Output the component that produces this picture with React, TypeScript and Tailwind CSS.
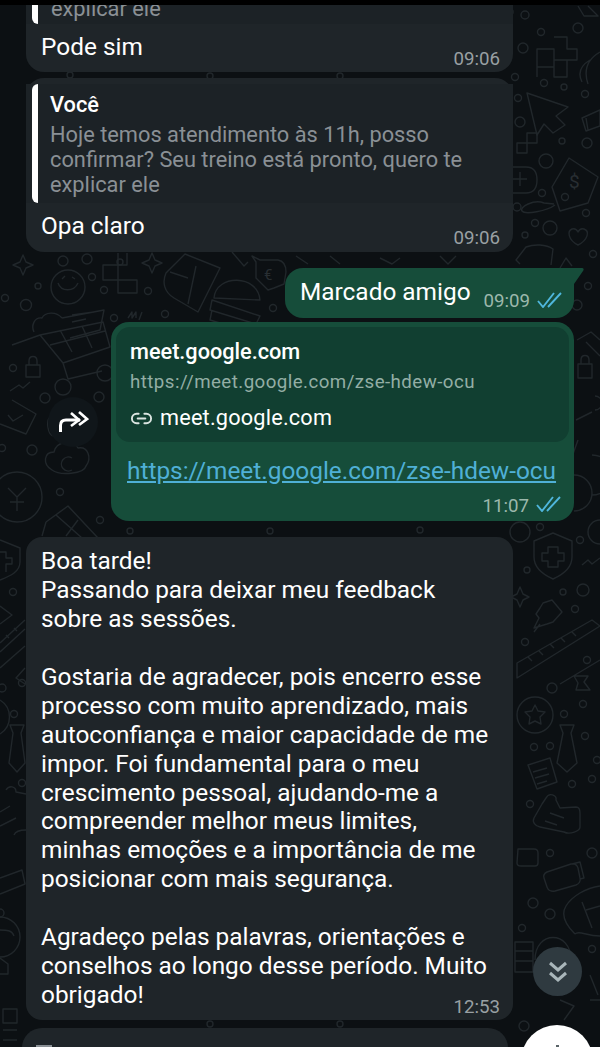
import { Link2 } from 'lucide-react';

// small rings scattered over the wallpaper: [x, y, r]
const rings = [
  [525, 15, 4], [541, 32, 3.5], [578, 28, 5], [523, 48, 5], [515, 77, 3.5], [544, 83, 3.5], [564, 87, 3], [585, 94, 3.5],
  [518, 98, 3.5], [520, 122, 5], [562, 141, 3], [587, 143, 5], [546, 161, 7], [542, 193, 3.5], [565, 197, 3.5], [517, 207, 4],
  [550, 228, 7], [535, 223, 3.5], [525, 235, 3], [586, 213, 3.5], [593, 254, 3.5], [588, 286, 3.5], [577, 305, 5],
  [520, 532, 10], [540, 527, 3.5], [580, 540, 3.5], [527, 570, 3], [563, 592, 3], [583, 590, 6], [575, 609, 3.5], [525, 642, 3.5], [587, 660, 3.5],
  [552, 688, 5], [583, 704, 3.5], [564, 714, 3.5], [585, 736, 3.5], [534, 747, 3.5], [550, 746, 3.5], [597, 760, 3.5], [592, 779, 3.5], [572, 784, 3.5],
  [530, 804, 3.5], [550, 853, 3.5], [592, 853, 5], [533, 903, 5], [550, 914, 5], [522, 928, 3.5], [592, 949, 3.5],
  [63, 261, 5], [87, 259, 5], [38, 286, 3], [92, 277, 3.5], [5, 298, 3.5], [26, 305, 5.5], [104, 290, 3.5], [148, 291, 3.5], [165, 314, 3.5], [114, 318, 3.5], [273, 308, 3.5],
  [13, 368, 3.5], [45, 398, 5], [99, 397, 5], [32, 450, 5], [60, 492, 3.5], [100, 520, 3.5], [2, 448, 3.5],
  [13, 592, 3.5], [22, 683, 3.5], [14, 714, 3.5], [22, 783, 3.5], [2, 688, 4], [0, 913, 4], [524, 1026, 5], [510, 12, 3],
  [70, 75, 3], [210, 76, 3], [340, 76, 3], [120, 262, 3], [130, 531, 3], [270, 531, 3], [420, 530, 3], [210, 1024, 3], [340, 1024, 3],
];

// wallpaper doodles, drawn once behind the chat
function Wallpaper() {
  return (
    <svg className="absolute inset-0" width="600" height="1047" fill="none" stroke="#21272b" strokeWidth="1.4" strokeLinejoin="round">
      {rings.map(([x, y, r], i) => (
        <circle key={i} cx={x} cy={y} r={r} />
      ))}
      {/* top right */}
      <path d="M554 37h13v12h10v11h-10v17h-13V67h-17V77h-0M537 67V49h17v18M567 60h-13" />
      <path d="M527 93l41 14-12 9 9 9-12 8-9-9-7 11z" />
      <path d="M527 133h10v10h-10zM517 143h10v10h-10z" />
      <path d="M510 167h16c8 0 11 6 11 13s-3 13-11 13h-16M520 172v14M513 179h14" />
      <path d="M569 158l29 19-10 26-28 8-8-24z" />
      <path d="M555 205c-8 6-30 10-33 6s12-12 22-8l10 1" />
      <path d="M578 245c-10-5-11-14-6-16 3-1 5 1 6 3 1-2 3-4 6-3 6 2 4 11-6 16z" />
      <path d="M520 264l-4-4 10-13c8-3 20-3 27 2l-2 16M560 268l6-10 6 8" />
      <path d="M588 6l10 10-14 0-6-10M590 60c-10 6-12 14-8 22M600 52c-14 8-16 20-12 32" />
      <path d="M582 118l18-8v16l-14 5zM586 118l2 12" />
      <text x="569" y="188" fontSize="19" fill="#282e32" stroke="none" fontFamily="Roboto">$</text>
      {/* beside the link bubble */}
      <path d="M578 364h14v14h-14zM581 364v-4c0-6 8-6 8 0v4M577 340l14 -8 9 8M600 356l-14-14" />
      <path d="M576 420l16-8M578 440l-5 14M595 396a7 7 0 1 1 0 14" />
      <path d="M574 475a18 18 0 0 1 0 36M592 455a20 20 0 0 1 0 40M600 520a12 12 0 0 0 0 24" />
      {/* right column, shield down to the balloon */}
      <path d="M553 533l19 8v16c0 12-10 18-19 22-9-4-19-10-19-22v-16zM548 547h10v6h6v8h-6v6h-10v-6h-6v-8h6z" />
      <path d="M582 565l6-5 4 4 8-6" />
      <path d="M520 587l3 7 6 3-6 3-3 7-3-7-6-3 6-3z" />
      <path d="M552 600l10 12-9 10-6 2-13 4 5-10-3-4 4-6 3-5zM534 632l6-8" />
      <path d="M517 663l75-43 8 6-83 52zM528 657l4 4M539 651l4 4M550 644l4 4M561 638l4 4M572 632l4 4" />
      <path d="M600 660l-40 24M574 676h14l-4 6 6 8-14 0 2-7z" />
      <circle cx="535" cy="715" r="18" />
      <path d="M535 705l3 6 7 1-5 5 1 7-6-3-6 3 1-7-5-5 7-1z" />
      <path d="M560 725h14l-3 8 6 30-10 9-10-9 6-30z" />
      <path d="M528 765l22-7 7 24-20 7zM533 772l14-4M535 778l14-4M537 784l10-3" />
      <path d="M546 798c3-6 11-3 10 2l4 8 16-1c3 0 4 3 4 6v14c0 4-10 8-16 5l-24-5c-5-1-8-5-6-9l8-14zM550 813l14 5M545 821l12 4" />
      <path d="M518 849h16c3 0 4 2 4 4v10c0 2-1 3-3 3h-14c-2 0-4-1-4-3z" />
      <path d="M547 872l24-8c4-1 6 1 7 4l2 10c1 3-1 6-4 7l-21 6c-4 1-7-1-8-4l-3-9c-1-3 1-5 3-6zM572 864l8-2 4 16-4 1" />
      <path d="M575 934c-10-10-14-20-9-28 6-10 20-18 34-20M600 936c-14 0-21-6-25-2M582 902l10 26M600 906l-14 4" />
      <path d="M515 942h18v30h-18zM515 951h18M515 961h18" />
      <path d="M535 960c0-30 36-30 36 0" />
      <path d="M560 1000l14 6-10 14M590 1000h10M590 975l8 20" />
      {/* band above the sent bubbles */}
      <path d="M23 255l3 7 7 3-7 3-3 7-3-7-7-3 7-3z" />
      <path d="M152 253l3 7 7 3-7 3-3 7-3-7-7-3 7-3z" />
      <circle cx="68" cy="287" r="17" />
      <path d="M58 283c3 9 16 9 20 0M62 279l3-3M72 277l3 2" />
      <path d="M62 318c-6-7-17-6-20 0-8-1-11 8-8 14M62 318l42-8-4 20-30 8M72 315l22-3M72 322l14-3" />
      <path d="M118 253v12h-15v15h15v13h19v-13h-19v-15h9v-12" />
      <path d="M185 254l35 14-22 44-24-14c-10-6-12-16-8-25zM170 272l18 6M196 266l-8 38" />
      <path d="M214 298c2-24 44-24 46 2zM212 300l48 16-4 8-46-14zM212 310l-2 10 46 14" />
      <path d="M252 256l8 4 18 0c6 1 8 6 8 12l-2 12-10 4-6 2-12-12 0-16zM232 252l12 14 4-4" />
      <text x="264" y="280" fontSize="15" fill="#282e32" stroke="none" fontFamily="Roboto">€</text>
      <path d="M128 318l4-6 0 6 4-6 0 6M142 312l-3 8" />
      <path d="M296 256l12 8M330 256l10 8M380 258l12 6 8-6M440 256l8 8 8-8" />
      {/* cart and everything under it */}
      <path d="M12 345l28-10 23 28 47-16-7-25-63 13M60 330l12 22M82 326l10 22M50 345l55-14M63 363l5 16 34-8" />
      <circle cx="63" cy="387" r="8" />
      <circle cx="105" cy="373" r="8" />
      <path d="M26 365h14v12H26zM29 365v-4c0-6 8-6 8 0v4" />
      <path d="M10 391l9-6 4 3 7-6" />
      <path d="M12 400l24 14-10 20-26-10M8 415l5 6 10-6" />
      <path d="M50 418c-4 0-3 18 4 18" />
      <path d="M52 470c-10-6-8-18 2-18 2-10 18-14 24-4 10-2 14 10 8 18-2 8-26 10-34 4zM72 458a7 7 0 1 0 0 12" />
      <circle cx="17" cy="497" r="25" />
      <path d="M8 488l9 9 9-9M17 497v14M10 502h14" />
      <path d="M46 522l22-16 30 32M56 515l26 23M46 522l-4 14M78 520l-12 16" />
      {/* left edge, beside the feedback bubble */}
      <path d="M0 540l20 8v14c0 10-10 14-20 18M0 552h6v6h6v6H6v8" />
      <path d="M0 606l12 9-12 9M0 643l25-23M0 652l25-23M6 635l3 3M14 628l3 3" />
      <path d="M0 668l25-22M25 668l-9 10 9 6" />
      <path d="M0 700a20 20 0 0 1 0 34" />
      <path d="M10 725h14l-3 8 4 30-8 9-8-9 4-30z" />
      <path d="M6 790c3-5 10-4 10 2l10 2M0 812l10-6M0 826l16-8M14 835c2-5 8-5 12-5" />
      <path d="M0 878l22-8 3 14-25 10" />
      <path d="M0 917a20 20 0 0 1 0 40M0 930c6 0 12 0 14 6" />
      <path d="M0 958l8 6v10H0" />
      <path d="M3 1023h14v-14H3zM3 1030h14M3 1040h14" />
    </svg>
  );
}

function Ticks() {
  return (
    <svg width="25" height="16" viewBox="0 0 25 16" fill="none" stroke="#4fb6dc" strokeWidth="1.9" className="shrink-0">
      <path d="M1 9l5 6L17 1M11 15L24 1" />
    </svg>
  );
}

function Time({ children }: { children: string }) {
  return <span className="text-[18.7px] leading-[24px] text-[#99a0a3]">{children}</span>;
}

export default function App() {
  return (
    <div className="relative w-[600px] h-[1047px] overflow-hidden bg-[#0c1013] font-['Roboto',sans-serif] text-white">
      <Wallpaper />
      <div className="absolute top-0 inset-x-0 h-[5px] bg-black z-10" />

      <div className="relative flex flex-col pt-[5px]">
        {/* replies */}
        <div className="ml-[26px] w-[487px] h-[67px] bg-[#1f2529] rounded-b-[18px]">
          <div className="h-[19px] overflow-hidden flex gap-[13px] pl-[6px] bg-[#1c2226]">
            <div className="w-[6px] h-[19px] bg-white rounded-bl-[6px]" />
            <p className="text-[21.8px] leading-[25px] text-[#8a9095] -mt-[9px]">explicar ele</p>
          </div>
          <div className="flex justify-between pl-[15px] pr-[13px]">
            <p className="text-[24.4px] leading-[29px] mt-[8px]">Pode sim</p>
            <div className="mt-[23px]"><Time>09:06</Time></div>
          </div>
        </div>

        <div className="ml-[26px] mt-[6px] w-[487px] h-[174px] pt-[6px] bg-[#1f2529] rounded-[18px]">
          <div className="flex gap-[12px] pl-[6px] h-[119px] bg-[#1c2226]">
            <div className="w-[6px] h-full bg-white rounded-l-[6px]" />
            <div className="pt-[8px]">
              <p className="text-[21.8px] leading-[25px] font-medium mb-[5px]">Você</p>
              <p className="text-[21.8px] leading-[25px] text-[#8a9095]">
                Hoje temos atendimento às 11h, posso
                <br />
                confirmar? Seu treino está pronto, quero te
                <br />
                explicar ele
              </p>
            </div>
          </div>
          <div className="flex justify-between pl-[15px] pr-[13px]">
            <p className="text-[24.4px] leading-[29px] mt-[8px]">Opa claro</p>
            <div className="mt-[23px]"><Time>09:06</Time></div>
          </div>
        </div>

        {/* sent */}
        <div className="ml-[285px] mt-[16px] w-[299px] h-[50px] flex">
          <div className="w-[289px] h-full bg-[#164d3a] rounded-[18px] rounded-tr-none flex pl-[15px] pt-[9px]">
            <p className="text-[24.4px] leading-[29px]">Marcado amigo</p>
            <div className="ml-[13px] mt-[12px] flex items-start gap-[7px]">
              <span className="text-[18.7px] leading-[24px] text-[#9cb8ac]">09:09</span>
              <div className="mt-[3px]"><Ticks /></div>
            </div>
          </div>
          <svg width="10" height="16" viewBox="0 0 10 16" className="shrink-0">
            <path d="M0 0h8c2 0 2 2 1 3L0 16z" fill="#164d3a" />
          </svg>
        </div>

        <div className="mt-[4px] flex items-center">
          {/* forward button */}
          <div className="ml-[48px] w-[50px] h-[50px] rounded-full bg-[#10161a] flex items-center justify-center">
            <svg width="31" height="21" viewBox="0 0 31 21" fill="none" stroke="#ffffff" strokeWidth="3">
              <path d="M2.5 21v-6.5Q2.5 9 8 9h14" />
              <path d="M13 2l8 7-8 6" strokeWidth="2.6" />
              <path d="M21 1l8 7-8 6" strokeWidth="2.6" />
            </svg>
          </div>
          <div className="ml-[13px] w-[463px] h-[199px] bg-[#164d3a] rounded-[18px] p-[5px]">
            <div className="h-[115px] bg-[#113f31] rounded-[14px] pl-[14px] pt-[12px]">
              <p className="text-[21.7px] leading-[25px] font-medium">meet.google.com</p>
              <p className="text-[18.7px] leading-[22px] tracking-[0.45px] text-[#93aea5] mt-[7px]">https://meet.google.com/zse-hdew-ocu</p>
              <div className="flex items-center gap-[7px] mt-[12px]">
                <Link2 size={23} strokeWidth={2} className="text-[#dbe5e1]" />
                <span className="text-[21.7px] leading-[26px] tracking-[0.2px]">meet.google.com</span>
              </div>
            </div>
            <p className="text-[24.4px] leading-[29px] text-[#4fb0d6] underline pl-[11px] mt-[14px] whitespace-nowrap">
              https://meet.google.com/zse-hdew-ocu
            </p>
            <div className="flex justify-end items-start gap-[7px] pr-[8px] mt-[9px]">
              <span className="text-[18.7px] leading-[24px] text-[#9cb8ac]">11:07</span>
              <div className="mt-[2px]"><Ticks /></div>
            </div>
          </div>
        </div>

        {/* feedback */}
        <div className="ml-[26px] mt-[16px] w-[487px] h-[483px] bg-[#1f2529] rounded-[16px] pl-[15px] pr-[13px] pt-[10px]">
          <p className="text-[24.4px] leading-[28.93px] whitespace-nowrap">
            Boa tarde!
            <br />
            Passando para deixar meu feedback
            <br />
            sobre as sessões.
            <br />
            <br />
            Gostaria de agradecer, pois encerro esse
            <br />
            processo com muito aprendizado, mais
            <br />
            autoconfiança e maior capacidade de me
            <br />
            impor. Foi fundamental para o meu
            <br />
            crescimento pessoal, ajudando-me a
            <br />
            compreender melhor meus limites,
            <br />
            minhas emoções e a importância de me
            <br />
            posicionar com mais segurança.
            <br />
            <br />
            Agradeço pelas palavras, orientações e
            <br />
            conselhos ao longo desse período. Muito
            <br />
            obrigado!
          </p>
          <div className="flex justify-end -mt-[15px]"><Time>12:53</Time></div>
        </div>
      </div>

      {/* input bar peeking at the bottom */}
      <div className="absolute left-[22px] top-[1028px] w-[486px] h-[40px] rounded-[24px] bg-[#1f2529]">
        <div className="absolute left-[14px] top-[17px] w-[16px] h-[3px] bg-[#8a9095]" />
      </div>
      {/* scroll down */}
      <div className="absolute left-[533px] top-[947px] w-[49px] h-[49px] rounded-full bg-[#2f3a40] flex items-center justify-center">
        <svg width="20" height="22" viewBox="0 0 20 22" fill="none" stroke="#a9b6ba" strokeWidth="3">
          <path d="M2 2l8 7 8-7M2 12l8 7 8-7" />
        </svg>
      </div>
      {/* send fab */}
      <div className="absolute left-[521px] top-[1025px] w-[72px] h-[72px] rounded-full bg-white flex justify-center">
        <div className="mt-[20px] w-[3px] h-[4px] bg-[#5a6468]" />
      </div>
    </div>
  );
}
